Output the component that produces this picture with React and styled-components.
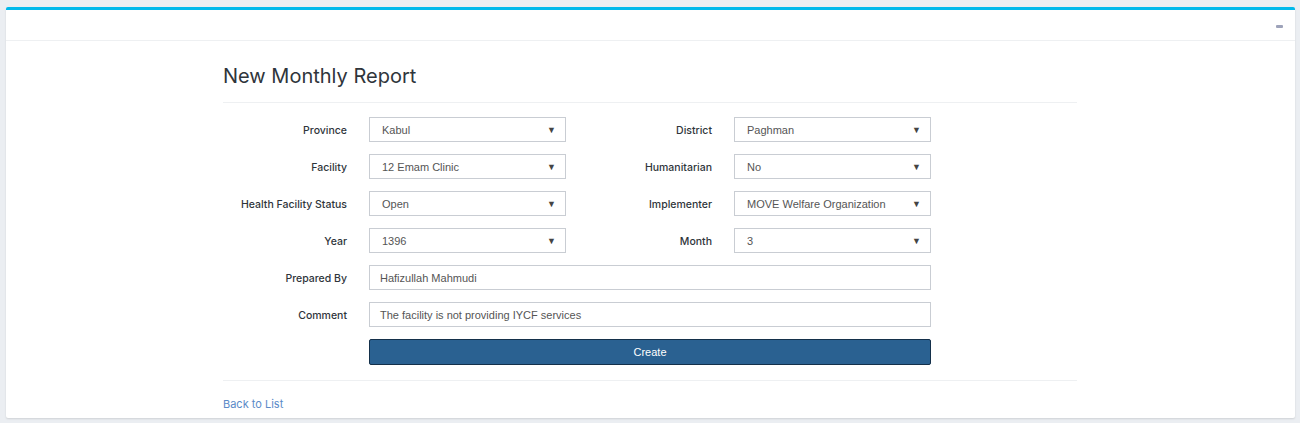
import React from 'react'
import styled, { createGlobalStyle } from 'styled-components'

const Global = createGlobalStyle`
    html, body {
        margin: 0;
        padding: 0;
        background: #ebeef2;
        font-family: Inter, "Open Sans", sans-serif;
    }
`

const fields = [
    [
        { label: 'Province', value: 'Kabul' },
        { label: 'District', value: 'Paghman' },
    ],
    [
        { label: 'Facility', value: '12 Emam Clinic' },
        { label: 'Humanitarian', value: 'No' },
    ],
    [
        { label: 'Health Facility Status', value: 'Open' },
        { label: 'Implementer', value: 'MOVE Welfare Organization' },
    ],
    [
        { label: 'Year', value: '1396' },
        { label: 'Month', value: '3' },
    ],
]

function App() {
    return (
        <Page>
            <Global />
            <Card>
                <CardHeader>
                    <Minimize />
                </CardHeader>
                <CardBody>
                    <Title>New Monthly Report</Title>
                    <Form>
                        {fields.map((row) =>
                            row.map((f) => (
                                <React.Fragment key={f.label}>
                                    <Label>{f.label}</Label>
                                    <Select>
                                        <span>{f.value}</span>
                                        <Caret>▼</Caret>
                                    </Select>
                                </React.Fragment>
                            ))
                        )}
                        <Label>Prepared By</Label>
                        <TextInput wide>Hafizullah Mahmudi</TextInput>
                        <Label>Comment</Label>
                        <TextInput wide>The facility is not providing IYCF services</TextInput>
                        <span />
                        <Button>Create</Button>
                    </Form>
                    <Footer>
                        <BackLink href="#">Back to List</BackLink>
                    </Footer>
                </CardBody>
            </Card>
        </Page>
    )
}

export default App

const Page = styled.div`
    padding: 7px 5px 6px 6px;
`

const Card = styled.div`
    background: #fff;
    border-top: 3px solid #00b9eb;
    border-radius: 2px;
    box-shadow: 0 1px 2px rgba(0, 0, 0, 0.12);
`

const CardHeader = styled.div`
    height: 30px;
    border-bottom: 1px solid #eef0f2;
    display: flex;
    align-items: center;
    justify-content: flex-end;
    padding-right: 12px;
`

const Minimize = styled.span`
    width: 7px;
    height: 3px;
    background: #9ea3ba;
    border-radius: 1px;
    margin-top: 2px;
`

const CardBody = styled.div`
    width: 854px;
    margin-left: 217px;
    padding-top: 23px;
`

const Title = styled.h2`
    margin: 0;
    font-size: 20px;
    font-weight: 400;
    color: #2f353b;
    padding-bottom: 14px;
    border-bottom: 1px solid #eef0f2;
    line-height: 24px;
`

const Form = styled.div`
    display: grid;
    grid-template-columns: 124px 197px 124px 197px;
    column-gap: 22px;
    row-gap: 12px;
    padding: 14px 0 15px;
    border-bottom: 1px solid #eef0f2;
`

const Label = styled.div`
    display: flex;
    align-items: center;
    justify-content: flex-end;
    padding-top: 1px;
    font-size: 10.5px;
    font-weight: 500;
    color: #2f353b;
`

const Field = styled.div`
    height: 25px;
    box-sizing: border-box;
    border: 1px solid #c9cdd3;
    display: flex;
    align-items: center;
    padding: 1px 9px 0 12px;
    font-family: "Liberation Sans", Arial, sans-serif;
    font-size: 11px;
    color: #555;
`

const Select = styled(Field)`
    justify-content: space-between;
`

const TextInput = styled(Field)`
    grid-column: ${({ wide }) => (wide ? '2 / 5' : 'auto')};
    padding-left: 10px;
`

const Caret = styled.span`
    font-size: 9px;
    color: #444;
`

const Button = styled.button`
    grid-column: 2 / 5;
    height: 26px;
    background: #2a6191;
    border: 1px solid #14304a;
    border-radius: 2px;
    color: #fff;
    font-family: "Liberation Sans", Arial, sans-serif;
    font-size: 11px;
`

const Footer = styled.div`
    padding: 15px 0 7px;
    line-height: 13px;
`

const BackLink = styled.a`
    font-size: 11px;
    color: #5b8ac8;
    text-decoration: none;
`
